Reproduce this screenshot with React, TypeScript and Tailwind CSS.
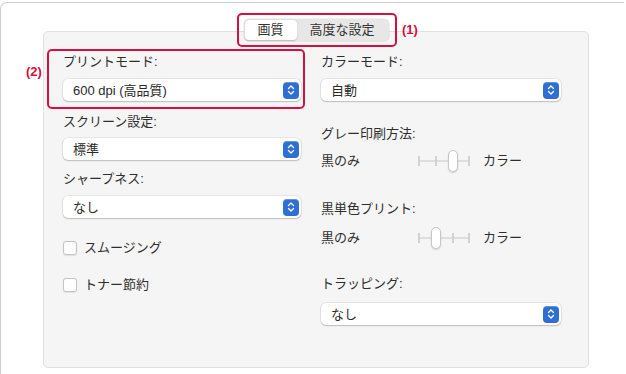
import { useState } from "react";

const jp = "font-['Liberation_Sans','Noto_Sans_CJK_JP',sans-serif]";

function Stepper() {
  return (
    <span className="flex h-[17px] w-[16px] items-center justify-center rounded-[4px] bg-[#2f6fd1] shadow-[inset_0_1px_0_rgba(255,255,255,0.25)]">
      <svg width="8" height="12" viewBox="0 0 8 12" fill="none">
        <path d="M1.5 4.5 4 2l2.5 2.5M1.5 7.5 4 10l2.5-2.5" stroke="#fff" strokeWidth="1.4" strokeLinecap="round" strokeLinejoin="round" />
      </svg>
    </span>
  );
}

function Select({ value, className = "" }: { value: string; className?: string }) {
  return (
    <div
      className={`flex h-[22px] items-center justify-between rounded-[5px] bg-white pl-[10px] pr-[2px] text-[13px] text-[#2a2a2a] shadow-[0_0_0_0.5px_rgba(0,0,0,0.12),0_1px_1.5px_rgba(0,0,0,0.18)] ${className}`}
    >
      <span className="leading-none">{value}</span>
      <Stepper />
    </div>
  );
}

function Label({ text, className = "" }: { text: string; className?: string }) {
  return <div className={`h-[16px] text-[13px] leading-[16px] text-[#2e2e2e] ${className}`}>{text}</div>;
}

function Check({ text, className = "" }: { text: string; className?: string }) {
  const [on, setOn] = useState(false);
  return (
    <label className={`flex h-[16px] items-center gap-[7px] ${className}`}>
      <span
        onClick={() => setOn(!on)}
        className="h-[14px] w-[14px] shrink-0 rounded-[3px] border border-[#c4c4c4] bg-white shadow-[0_0.5px_1px_rgba(0,0,0,0.08)]"
      />
      <span className="text-[13px] leading-[16px] text-[#2e2e2e]">{text}</span>
    </label>
  );
}

function Slider({ pos }: { pos: number }) {
  const ticks = [0, 17, 34, 50];
  return (
    <div className="relative h-[22px] w-[52px]">
      <div className="absolute left-0 right-0 top-[10px] h-[2px] bg-[#dedede]" />
      {ticks.map((t) => (
        <div key={t} className="absolute top-[6px] h-[10px] w-[1.5px] bg-[#d2d2d2]" style={{ left: t }} />
      ))}
      <div
        className="absolute top-0 h-[22px] w-[10px] rounded-full border border-[#c6c6c6] bg-white shadow-[0_1px_1.5px_rgba(0,0,0,0.15)]"
        style={{ left: ticks[pos] - 4 }}
      />
    </div>
  );
}

function SliderRow({ pos, className = "" }: { pos: number; className?: string }) {
  return (
    <div className={`flex h-[22px] items-center text-[13px] text-[#2e2e2e] ${className}`}>
      <span className="w-[97px]">黒のみ</span>
      <Slider pos={pos} />
      <span className="ml-[13px]">カラー</span>
    </div>
  );
}

export default function App() {
  return (
    <div className={`relative h-[374px] w-[626px] overflow-hidden bg-white ${jp}`}>
      <div className="mt-[2px] h-[372px] w-[624px] rounded-tl-[7px] border-l border-t border-[#cfcfcf] pt-[16px]">
        <div className="relative ml-[42px] w-[546px] pt-[12px]">
          <div className="absolute left-0 right-0 top-0 z-10 flex justify-center">
            <div className="flex h-[22px] rounded-[5px] bg-[#e7e7e7] p-[1px] text-[13px] text-[#333] shadow-[0_0_0_0.5px_rgba(0,0,0,0.12)]">
              <div className="flex w-[52px] items-center justify-center rounded-[4px] bg-white shadow-[0_0.5px_1.5px_rgba(0,0,0,0.2)]">
                画質
              </div>
              <div className="flex w-[91px] items-center justify-center">高度な設定</div>
            </div>
          </div>
          <div className="flex h-[337px] gap-[20px] rounded-[5px] border border-[#e0e0e0] bg-[#f5f5f5] pl-[19px] pt-[22px]">
            <div className="flex w-[238px] flex-col">
              <Label text="プリントモード:" />
              <Select value="600 dpi (高品質)" className="mt-[9px]" />
              <Label text="スクリーン設定:" className="mt-[13px]" />
              <Select value="標準" className="mt-[8px]" />
              <Label text="シャープネス:" className="mt-[11px]" />
              <Select value="なし" className="mt-[9px]" />
              <Check text="スムージング" className="mt-[22px]" />
              <Check text="トナー節約" className="mt-[21px]" />
            </div>
            <div className="flex w-[240px] flex-col">
              <Label text="カラーモード:" />
              <Select value="自動" className="mt-[9px]" />
              <Label text="グレー印刷方法:" className="mt-[25px]" />
              <SliderRow pos={2} className="mt-[8px]" />
              <Label text="黒単色プリント:" className="mt-[29px]" />
              <SliderRow pos={1} className="mt-[10px]" />
              <Label text="トラッピング:" className="mt-[27px]" />
              <Select value="なし" className="mt-[11px]" />
            </div>
          </div>
        </div>
      </div>

      {/* annotation callouts */}
      <div className="pointer-events-none absolute left-[237px] top-[13px] h-[34px] w-[160px] rounded-[5px] border-2 border-[#d5103f]" />
      <div className="absolute left-[402px] top-[22px] text-[13px] font-bold leading-[16px] text-[#d5103f]">(1)</div>
      <div className="pointer-events-none absolute left-[47px] top-[49px] h-[60px] w-[258px] rounded-[5px] border-2 border-[#d5103f]" />
      <div className="absolute left-[26px] top-[64px] text-[13px] font-bold leading-[16px] text-[#d5103f]">(2)</div>
    </div>
  );
}
